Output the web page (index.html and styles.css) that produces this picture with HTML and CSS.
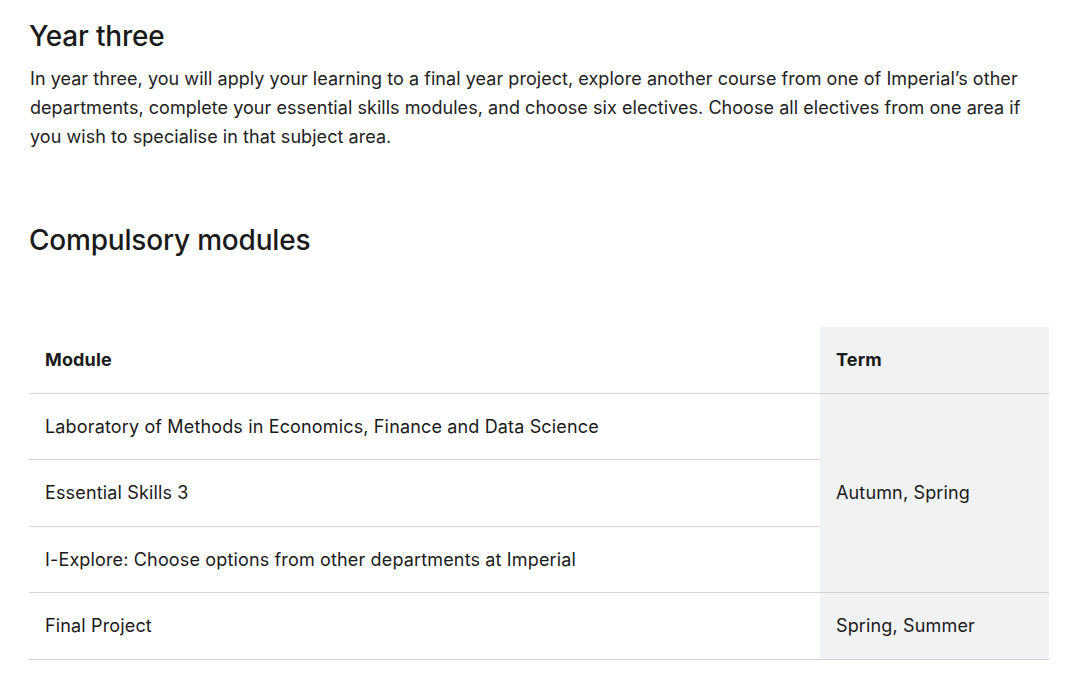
FILE: index.html
```html
<!DOCTYPE html>
<html lang="en">
<head>
<meta charset="utf-8">
<title>Year three</title>
<link rel="stylesheet" href="styles.css">
</head>
<body>
<main class="page">
  <section class="intro">
    <h2 class="year-title">Year three</h2>
    <p class="year-text">In year three, you will apply your learning to a final year project, explore another course from one of Imperial’s other departments, complete your essential skills modules, and choose six electives. Choose all electives from one area if you wish to specialise in that subject area.</p>
  </section>
  <section class="modules">
    <h3 class="modules-title">Compulsory modules</h3>
    <table class="module-table">
      <thead>
        <tr>
          <th class="col-module">Module</th>
          <th class="col-term">Term</th>
        </tr>
      </thead>
      <tbody>
        <tr>
          <td class="col-module">Laboratory of Methods in Economics, Finance and Data Science</td>
          <td class="col-term" rowspan="3">Autumn, Spring</td>
        </tr>
        <tr>
          <td class="col-module">Essential Skills 3</td>
        </tr>
        <tr>
          <td class="col-module">I-Explore: Choose options from other departments at Imperial</td>
        </tr>
        <tr>
          <td class="col-module">Final Project</td>
          <td class="col-term">Spring, Summer</td>
        </tr>
      </tbody>
    </table>
  </section>
</main>
</body>
</html>
```

FILE: styles.css
```css
* { box-sizing: border-box; }
html, body { margin: 0; padding: 0; background: #ffffff; }
body {
  font-family: Inter, "Noto Sans", "Liberation Sans", sans-serif;
  color: #1a1a1a;
}
.page {
  padding: 18px 31px 0 29px;
}
.year-title {
  margin: 0;
  font-size: 28px;
  font-weight: 500;
  line-height: 36px;
  letter-spacing: -0.2px;
}
.year-text {
  margin: 10px 0 0 1px;
  font-size: 18px;
  line-height: 29px;
  letter-spacing: 0.05px;
  color: #222;
}
.modules-title {
  margin: 71px 0 0 0;
  font-size: 28px;
  font-weight: 500;
  line-height: 36px;
  letter-spacing: -0.2px;
}
.module-table {
  margin-top: 69px;
  width: 100%;
  border-collapse: collapse;
  font-size: 18px;
  letter-spacing: 0.15px;
}
.module-table th,
.module-table td {
  text-align: left;
  padding: 0 16px;
  height: 66.5px;
  border-bottom: 1.5px solid #d4d4d6;
  vertical-align: middle;
}
.module-table th {
  font-weight: 700;
  height: 66px;
}
.col-module { width: 791px; }
.col-term { background: #f1f2f4; width: 229px; padding-left: 15px; }
```
